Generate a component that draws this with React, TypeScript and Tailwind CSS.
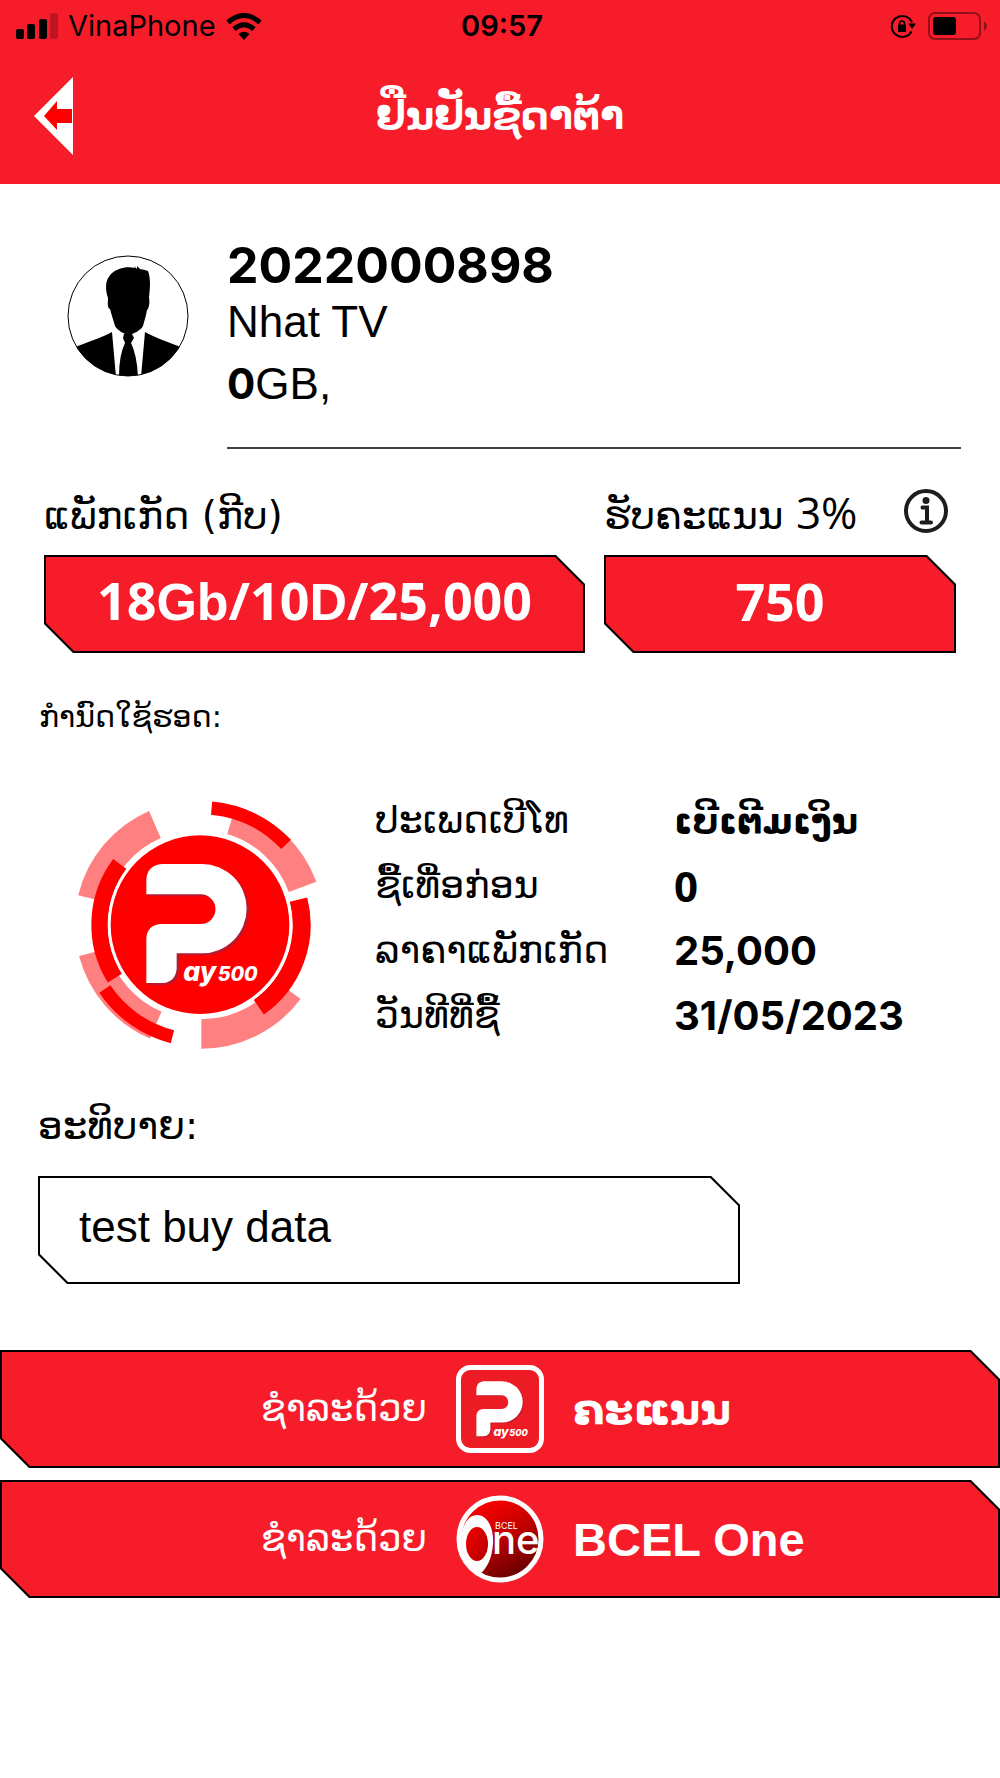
import React from 'react';

const details = [
  { label: 'ປະເພດເບີໂທ', value: 'ເບີເຕີມເງິນ', font: "text-4xl font-['DejaVu_Sans',sans-serif]" },
  { label: 'ຊື້ເທື່ອກ່ອນ', value: '0', font: "text-[42px] font-['Open_Sans',sans-serif]" },
  { label: 'ລາຄາແພັກເກັດ', value: '25,000', font: "text-[40px] font-['Inter',sans-serif]" },
  { label: 'ວັນທີທີ່ຊື້', value: '31/05/2023', font: "text-[40px] font-['Inter',sans-serif]" },
];

const chamfer = '[clip-path:polygon(0_0,calc(100%-29px)_0,100%_29px,100%_100%,29px_100%,0_calc(100%-29px))]';
const chamferInner = '[clip-path:polygon(0_0,calc(100%-28px)_0,100%_28px,100%_100%,28px_100%,0_calc(100%-28px))]';

const arc = (r: number, from: number, to: number, cx = 423) => {
  const point = (deg: number) => {
    const a = (deg * Math.PI) / 180;
    return `${(cx + r * Math.cos(a)).toFixed(1)} ${(434 + r * Math.sin(a)).toFixed(1)}`;
  };
  return `M${point(from)} A${r} ${r} 0 0 1 ${point(to)}`;
};

const P_SHAPE = 'M259 343V298Q262 256 306 252H426A134 134 0 0 1 426 520H350V566Q346 606 308 609H259V474Q262 434 306 432H422A44 44 0 0 0 422 343Z';

const PayMark = ({ shadow }: { shadow: string }) => (
  <>
    <path d={P_SHAPE} fill={shadow} transform="translate(7 6)" />
    <path d={P_SHAPE} fill="#fff" />
    <text x="370" y="604" fill="#fff" fontFamily="Inter, sans-serif" fontWeight="800" fontStyle="italic" fontSize="80">
      ay<tspan fontSize="59" dx="4">500</tspan>
    </text>
  </>
);

const PayLogo = () => (
  <svg viewBox="0 0 840 870" className="w-[280px] h-[290px] shrink-0">
    <g fill="none" stroke="#ff8080" strokeWidth="88">
      <path d={arc(328, 193.7, 246.4, 416)} />
      <path d={arc(328, -73.3, -20.2, 420)} />
      <path d={arc(328, 36.8, 90, 424)} />
      <path d={arc(328, 113.3, 165.3, 417)} />
    </g>
    <g fill="none" stroke="#f00">
      <path d={arc(302, -14.4, 55)} strokeWidth="54" />
      <path d={arc(304, 148.2, 216.8)} strokeWidth="50" />
      <path d={arc(351, -84.8, -43.3)} strokeWidth="40" />
      <path d={arc(347, 104.3, 146.2)} strokeWidth="40" />
    </g>
    <circle cx="420" cy="434" r="277" fill="#fff" />
    <circle cx="420" cy="434" r="268" fill="#f00" />
    <PayMark shadow="#b51a30" />
  </svg>
);

const Avatar = () => (
  <svg viewBox="0 0 122 122" className="w-[122px] h-[122px] shrink-0">
    <clipPath id="avatar"><circle cx="61" cy="61" r="60" /></clipPath>
    <circle cx="61" cy="61" r="60" fill="#fff" stroke="#000" />
    <g clipPath="url(#avatar)">
      <path d="M48 71C46 64 44 58 43 54C40 53 41 47 41 43C38 34 38 25 44 19C50 13 60 11 68 13L67 11L70 14L70 11L73 14L78 15L81 16C84 24 83 34 82 42C83 47 82 54 80 55C79 61 77 67 76 71C74 75 67 79 61 80C57 79 50 75 48 71Z" />
      <path d="M45 77L49 122H0V96Q10 91 24 86Q38 81 45 77Z" />
      <path d="M78 77L74 122H122V96Q112 91 98 86Q85 81 78 77Z" />
      <path d="M57 79H65L67 83L64 88Q70 100 71 122H52Q52 100 58 88L56 83Z" />
    </g>
  </svg>
);

const PayIcon = () => (
  <svg viewBox="0 0 88 88" className="w-[88px] h-[88px]">
    <rect x="2.5" y="2.5" width="83" height="83" rx="12" fill="#ed1c24" stroke="#fff" strokeWidth="5" />
    <g transform="translate(-19.5 -22.5) scale(.154)">
      <PayMark shadow="#c4182a" />
    </g>
  </svg>
);

const BcelIcon = () => (
  <svg viewBox="0 0 88 88" className="w-[88px] h-[88px]">
    <linearGradient id="bcel" x1=".3" y1=".1" x2=".75" y2="1">
      <stop offset="0" stopColor="#f60000" />
      <stop offset=".45" stopColor="#bd0000" />
      <stop offset="1" stopColor="#5c0000" />
    </linearGradient>
    <linearGradient id="bcelDot" x1="0" y1="0" x2="1" y2="1">
      <stop offset="0" stopColor="#f00000" />
      <stop offset="1" stopColor="#b50000" />
    </linearGradient>
    <clipPath id="bcelClip"><circle cx="44" cy="44" r="43" /></clipPath>
    <circle cx="44" cy="44" r="41" fill="url(#bcel)" stroke="#fff" strokeWidth="5" />
    <g clipPath="url(#bcelClip)">
      <path d="M21 20C32 20 38 34 37 49C36 63 31 73 25 78C13 72 5 58 5 44C6 29 13 20 21 20Z" fill="#fff" />
      <ellipse cx="21" cy="49" rx="11" ry="17" fill="url(#bcelDot)" />
      <text fill="#fff" fontFamily="Inter, sans-serif">
        <tspan x="39" y="34" fontSize="9">BCEL</tspan>
        <tspan x="36" y="59" fontSize="40" fontWeight="500">ne</tspan>
      </text>
    </g>
  </svg>
);

const StatusBar = () => (
  <div className="h-[52px] pl-4 pr-3 grid grid-cols-3 items-center text-black text-[29px] font-['Inter',sans-serif]">
    <div className="flex items-center gap-2.5">
      <svg viewBox="0 0 42 26" className="w-[42px] h-[26px]">
        <rect y="16" width="8" height="10" rx="2" />
        <rect x="11" y="11" width="8" height="15" rx="2" />
        <rect x="23" y="6" width="8" height="20" rx="2" />
        <rect x="34" width="8" height="26" rx="2" opacity=".22" />
      </svg>
      <span>VinaPhone</span>
      <svg viewBox="0 0 36 27" className="w-9 h-[27px]">
        <g fill="none" stroke="#000" strokeWidth="5">
          <path d="M2 9.500Q18-4.500 34 9.500" />
          <path d="M8 16Q18 7.500 28 16" />
        </g>
        <path d="M12.500 21Q18 16.500 23.500 21L18 27Z" />
      </svg>
    </div>
    <div className="text-center font-semibold">09:57</div>
    <div className="flex items-center justify-end gap-3">
      <svg viewBox="0 0 26 24" className="w-[26px] h-6">
        <path d="M21.500 17.500A10.500 10.500 0 1 1 22 8.500" fill="none" stroke="#000" strokeWidth="2" />
        <path d="M18.500 9.500H26L22 15Z" />
        <rect x="8" y="10.500" width="8" height="7.500" rx="1" />
        <path d="M9.500 11V9.500a2.500 2.500 0 0 1 5 0V11" fill="none" stroke="#000" strokeWidth="1.500" />
      </svg>
      <svg viewBox="0 0 60 28" className="w-[60px] h-7">
        <rect x="1" y="1" width="51" height="26" rx="6" fill="none" stroke="#000" strokeOpacity=".4" strokeWidth="2" />
        <rect x="5" y="5" width="23" height="18" rx="3" />
        <path d="M56 9Q62 14 56 19Z" opacity=".4" />
      </svg>
    </div>
  </div>
);

const Badge = ({ children }: { children: React.ReactNode }) => (
  <div className={`bg-black p-0.5 ${chamfer}`}>
    <div className={`h-[94px] pb-1.5 bg-[#f71c2a] flex items-center justify-center text-white text-[52px] leading-none font-bold font-['Open_Sans',sans-serif] ${chamferInner}`}>
      <div>{children}</div>
    </div>
  </div>
);

const Letters = ({ children }: { children: React.ReactNode }) => (
  <span className="font-['Liberation_Sans',sans-serif]">{children}</span>
);

const PayButton = ({ icon, children }: { icon: React.ReactNode; children: React.ReactNode }) => (
  <button type="button" className={`w-full bg-black p-0.5 ${chamfer}`}>
    <span className={`h-[114px] bg-[#f71c2a] text-white grid grid-cols-[1fr_88px_1fr] gap-[29px] items-center ${chamferInner}`}>
      <span className="text-right text-[37px]">ຊຳລະດ້ວຍ</span>
      {icon}
      <span className="text-left font-bold">{children}</span>
    </span>
  </button>
);

const App: React.FC = () => {
  return (
    <div className="min-h-screen bg-white text-black font-['DejaVu_Sans',sans-serif]">
      <header className="bg-[#f71c2a]">
        <StatusBar />
        <div className="h-[132px] px-[34px] pb-1 grid grid-cols-[40px_1fr_40px] items-center">
          <button type="button" aria-label="ກັບຄືນ">
            <svg viewBox="0 0 40 78" className="w-10 h-[78px]">
              <path d="M39 0V78L0 39Z" fill="#fff" />
              <path d="M10 39L23 24V32H38V46H23V53Z" fill="#f00" />
            </svg>
          </button>
          <h1 className="text-center text-white text-[39px] font-bold">ຢືນຢັນຊື້ດາຕ້າ</h1>
        </div>
      </header>

      <main>
        <section className="pt-[51px] pl-[67px] pr-[39px] flex gap-[38px]">
          <div className="pt-5"><Avatar /></div>
          <div className="flex-1 h-[214px] border-b-2 border-[#444] font-['Liberation_Sans',sans-serif] text-[44px]">
            <p className="text-[50px] leading-[60px] font-bold font-['Inter',sans-serif]">2022000898</p>
            <p className="leading-[54px]">Nhat TV</p>
            <p className="leading-[70px]"><b className="text-[42px] font-['Inter',sans-serif]">0</b>GB,</p>
          </div>
        </section>

        <section className="pt-9 pl-11 pr-11 grid grid-cols-[541fr_352fr] gap-x-[19px]">
          <div>
            <h2 className="h-[70px] text-[39px] leading-[62px]">ແພັກເກັດ (ກີບ)</h2>
            <Badge>18<Letters>Gb</Letters>/10<Letters>D</Letters>/25,000</Badge>
          </div>
          <div>
            <div className="h-[70px] pr-2 flex justify-between">
              <h2 className="text-[39px] leading-[62px]">ຮັບຄະແນນ <span className="text-[44px] leading-none font-['Open_Sans',sans-serif]">3%</span></h2>
              <button type="button" aria-label="ຂໍ້ມູນ" className="self-start pt-1">
                <svg viewBox="0 0 44 44" className="w-11 h-11">
                  <circle cx="22" cy="22" r="20" fill="none" stroke="#1d1d1b" strokeWidth="4" />
                  <circle cx="22" cy="11.500" r="3.500" fill="#1d1d1b" />
                  <path d="M18.500 18.500H23V33M17.500 33.500H27" fill="none" stroke="#1d1d1b" strokeWidth="4" strokeLinecap="round" />
                </svg>
              </button>
            </div>
            <Badge>750</Badge>
          </div>
        </section>

        <p className="pl-[39px] pt-9 text-[30px] leading-[55px]">ກຳນົດໃຊ້ຮອດ:</p>

        <section className="pt-9 pl-[60px] flex gap-[35px]">
          <PayLogo />
          <dl className="pt-2 flex-1">
            {details.map((row) => (
              <div key={row.label} className="h-[65px] flex items-center">
                <dt className="w-[299px] text-[38px]">{row.label}</dt>
                <dd className={`font-bold leading-none ${row.font}`}>{row.value}</dd>
              </div>
            ))}
          </dl>
        </section>

        <div className="px-[38px] pt-[26px]">
          <label htmlFor="note" className="block text-[39px] leading-[60px]">ອະທິບາຍ:</label>
          <div className={`mt-5 w-[76%] bg-black p-0.5 ${chamfer}`}>
            <input
              id="note"
              defaultValue="test buy data"
              className={`block w-full h-[104px] pl-[39px] pb-1.5 bg-white outline-none text-[44px] font-['Liberation_Sans',sans-serif] ${chamferInner}`}
            />
          </div>
        </div>

        <div className="pt-[66px] flex flex-col gap-3">
          <PayButton icon={<PayIcon />}>
            <span className="text-[42px]">ຄະແນນ</span>
          </PayButton>
          <PayButton icon={<BcelIcon />}>
            <span className="text-[47px] leading-none font-['Liberation_Sans',sans-serif]">BCEL One</span>
          </PayButton>
        </div>
      </main>
    </div>
  );
};

export default App;
